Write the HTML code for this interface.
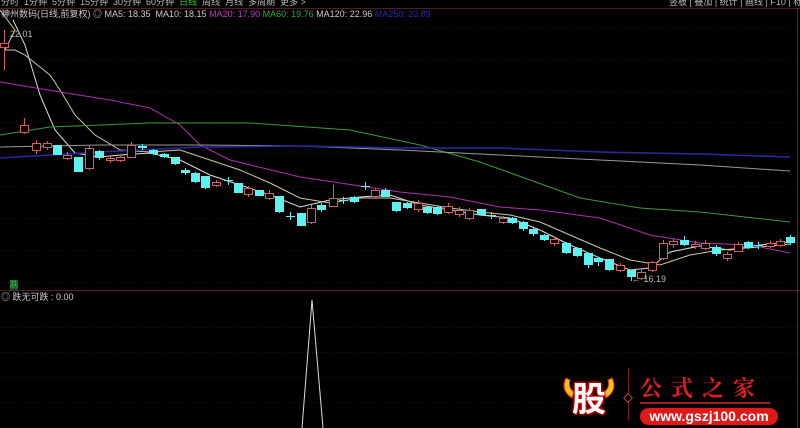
<!DOCTYPE html>
<html><head><meta charset="utf-8"><style>
html,body{margin:0;padding:0;background:#000;width:800px;height:428px;overflow:hidden;font-family:"Liberation Sans","Noto Sans CJK SC",sans-serif}
.t{position:absolute;font-size:9px;white-space:nowrap;line-height:10px}
</style></head><body>
<svg width="800" height="428" style="position:absolute;left:0;top:0">
<g stroke="#2a0c0c" stroke-dasharray="1,2" stroke-width="1">
<line x1="0" x2="797" y1="28.5" y2="28.5"/><line x1="0" x2="797" y1="59.5" y2="59.5"/><line x1="0" x2="797" y1="91.5" y2="91.5"/><line x1="0" x2="797" y1="122.5" y2="122.5"/><line x1="0" x2="797" y1="153.5" y2="153.5"/><line x1="0" x2="797" y1="186.5" y2="186.5"/><line x1="0" x2="797" y1="218.5" y2="218.5"/><line x1="0" x2="797" y1="250.5" y2="250.5"/><line x1="0" x2="797" y1="282.5" y2="282.5"/>
<line x1="0" x2="797" y1="327.5" y2="327.5"/><line x1="0" x2="797" y1="352.5" y2="352.5"/><line x1="0" x2="797" y1="377.5" y2="377.5"/><line x1="0" x2="797" y1="402.5" y2="402.5"/>
</g>
<line x1="0" x2="800" y1="290.5" y2="290.5" stroke="#5a1a1a"/>
<line x1="0" x2="800" y1="8.5" y2="8.5" stroke="#5a1a1a"/>
<line x1="797.5" x2="797.5" y1="8" y2="428" stroke="#7a1a1a"/>
<g fill="none" stroke-width="1">
<polyline stroke="#ddd" points="13,20 25,45 40,95 55,130 75,153 100,157 120,155 150,153 180,160 210,175 240,185 270,195 300,207 330,200 360,197 390,195 420,205 450,210 480,215 510,218 540,230 570,245 600,258 630,270 650,268 670,252 700,246 730,250 760,245 790,242"/>
<polyline stroke="#cfc8a0" points="0,10 15,30 5,50 15,50 25,55 50,75 60,90 75,115 95,135 120,150 150,152 180,150 210,160 240,170 270,183 300,198 330,203 360,198 390,198 420,203 450,208 480,212 510,215 540,222 570,235 600,248 630,260 660,265 690,255 720,250 760,247 790,244"/>
<polyline stroke="#b030b0" points="0,82 60,92 110,100 150,108 180,125 200,145 230,160 300,177 400,192 450,197 500,207 540,210 600,218 650,235 700,243 750,245 790,253"/>
<polyline stroke="#3a9a3a" points="0,135 50,127 150,123 250,123 350,130 420,145 480,162 530,180 580,198 640,208 700,212 790,222"/>
<polyline stroke="#999" points="0,147 100,145 200,145 300,146 400,150 500,155 600,160 700,165 790,171"/>
<polyline stroke="#2a2aa0" stroke-width="1.5" points="0,158 100,152 200,147 300,146 400,148 500,148 600,152 700,154 790,157"/>
<polyline stroke="#ddd" points="302,428 312,300 323,428"/>
</g>
<g id="c"></g>
<path d="M566,378 Q560,390 572,398 L574,392 Q568,388 570,380Z" fill="#f0c020" stroke="#e03010"/>
<path d="M612,378 Q618,390 606,398 L604,392 Q610,388 608,380Z" fill="#f0c020" stroke="#e03010"/>
<line x1="628.5" x2="628.5" y1="368" y2="420" stroke="#802020"/>
<rect x="625" y="395" width="6" height="6" transform="rotate(45 628 398)" fill="#000" stroke="#c04040"/>
</svg>
<script>
var d=[[4,"r",43,47,30,70],[24,"r",125,132,118,134],[36,"r",143,150,140,154],[47,"r",143,147,141,150],[57,"c",145,155,145,155],[67,"r",155,158,152,160],[78,"c",157,172,157,172],[89,"r",148,168,145,170],[99,"c",151,158,150,160],[110,"r",158,160,155,163],[120,"r",157,160,156,162],[131,"r",145,157,142,158],[142,"c",146,148,144,150],[153,"c",150,154,149,155],[164,"c",154,157,153,158],[175,"c",157,164,157,165],[185,"c",170,173,168,175],[195,"c",173,182,172,183],[205,"c",176,188,176,189],[216,"r",182,185,180,187],[228,"c",180,181,177,185],[238,"c",183,193,183,193],[248,"r",188,194,186,197],[259,"c",190,196,190,196],[269,"r",193,198,190,200],[279,"c",196,212,196,213],[290,"c",216,217,212,220],[301,"c",213,226,213,226],[311,"r",208,222,205,224],[321,"c",205,210,203,212],[333,"r",198,206,185,207],[343,"c",200,201,197,204],[354,"c",197,202,196,203],[365,"c",186,187,182,190],[375,"r",190,196,188,198],[385,"c",190,197,188,197],[396,"c",202,211,202,212],[407,"c",203,208,202,209],[418,"r",203,209,200,212],[427,"c",207,213,206,214],[437,"c",207,214,206,215],[448,"r",206,212,203,214],[459,"r",210,214,207,217],[469,"r",210,218,208,220],[481,"c",209,215,209,216],[491,"c",215,216,212,219],[503,"r",218,222,216,224],[512,"c",218,223,217,224],[523,"c",222,229,221,231],[533,"c",229,234,228,236],[544,"c",235,240,234,241],[554,"r",239,243,237,246],[566,"c",243,253,242,254],[577,"c",248,256,247,257],[588,"c",253,265,253,268],[598,"c",258,262,257,266],[609,"c",259,270,259,271],[620,"r",265,270,263,272],[631,"c",270,277,270,281],[641,"r",272,278,268,280],[652,"r",262,270,261,272],[663,"r",243,258,240,260],[673,"r",241,244,239,248],[684,"c",240,245,236,246],[695,"r",244,246,241,249],[705,"r",243,248,240,250],[716,"c",247,254,245,256],[727,"r",254,258,252,261],[738,"r",244,251,242,252],[748,"c",242,248,241,249],[758,"c",245,246,242,249],[770,"r",243,246,241,248],[780,"r",241,245,239,247],[790,"c",237,243,235,245]];
var s="";d.forEach(function(a){var col=a[1]=="r"?"#d06060":"#5ff0f0";s+='<line x1="'+(a[0]+.5)+'" x2="'+(a[0]+.5)+'" y1="'+a[4]+'" y2="'+a[5]+'" stroke="'+col+'"/>';
if(a[1]=="r")s+='<rect x="'+(a[0]-3.5)+'" y="'+(a[2]+.5)+'" width="8" height="'+Math.max(1,a[3]-a[2])+'" fill="#000" stroke="'+col+'"/>';
else s+='<rect x="'+(a[0]-4)+'" y="'+a[2]+'" width="9" height="'+Math.max(1,a[3]-a[2])+'" fill="'+col+'"/>';});
document.getElementById("c").innerHTML=s;
</script>
<div class="t" style="left:1px;top:-3px;color:#bbb">分时&nbsp; 1分钟&nbsp; 5分钟&nbsp; 15分钟&nbsp; 30分钟&nbsp; 60分钟&nbsp; <span style="color:#3c3">日线</span>&nbsp; 周线&nbsp; 月线&nbsp; 多周期&nbsp; 更多 &gt;</div>
<div class="t" style="left:669px;top:-3px;color:#bbb">竖板 | 叠加 | 统计 | 画线 | F10 | 标记 | ▪画</div>
<div class="t" style="left:1px;top:9px;color:#ccc">神州数码(日线,前复权) ◎ MA5: 18.35 &nbsp;MA10: 18.15 <span style="color:#c040c0">MA20: 17.90</span> <span style="color:#3a3">MA60: 19.76</span> MA120: 22.96 <span style="color:#2a2ab0">MA250: 23.89</span></div>
<div class="t" style="left:10px;top:29px;color:#bbb">22.01</div>
<div class="t" style="left:632px;top:274px;color:#bbb">← 16.19</div>
<div class="t" style="left:10px;top:280px;color:#3c3;background:#153;font-size:8px">跌</div>
<div class="t" style="left:1px;top:292px;color:#ccc">◎ 跌无可跌 : 0.00</div>
<div style="position:absolute;left:566px;top:374px;width:46px;height:46px;color:#fff;font:bold 34px 'Noto Sans CJK SC',sans-serif;line-height:46px;text-align:center;text-shadow:0 0 2px #d00,1px 1px 2px #f00,-1px -1px 2px #f00">股</div>
<div style="position:absolute;left:640px;top:372px;color:#e02020;font:bold 22px 'Noto Serif CJK SC',serif;letter-spacing:9px">公式之家</div>
<div style="position:absolute;left:640px;top:402px;width:130px;height:2px;background:#a02020"></div>
<div style="position:absolute;left:640px;top:408px;width:138px;height:17px;background:#e01818;border-radius:9px;color:#fff;font:bold 14px 'Liberation Sans',sans-serif;line-height:17px;text-align:center">www.gszj100.com</div>
</body></html>
